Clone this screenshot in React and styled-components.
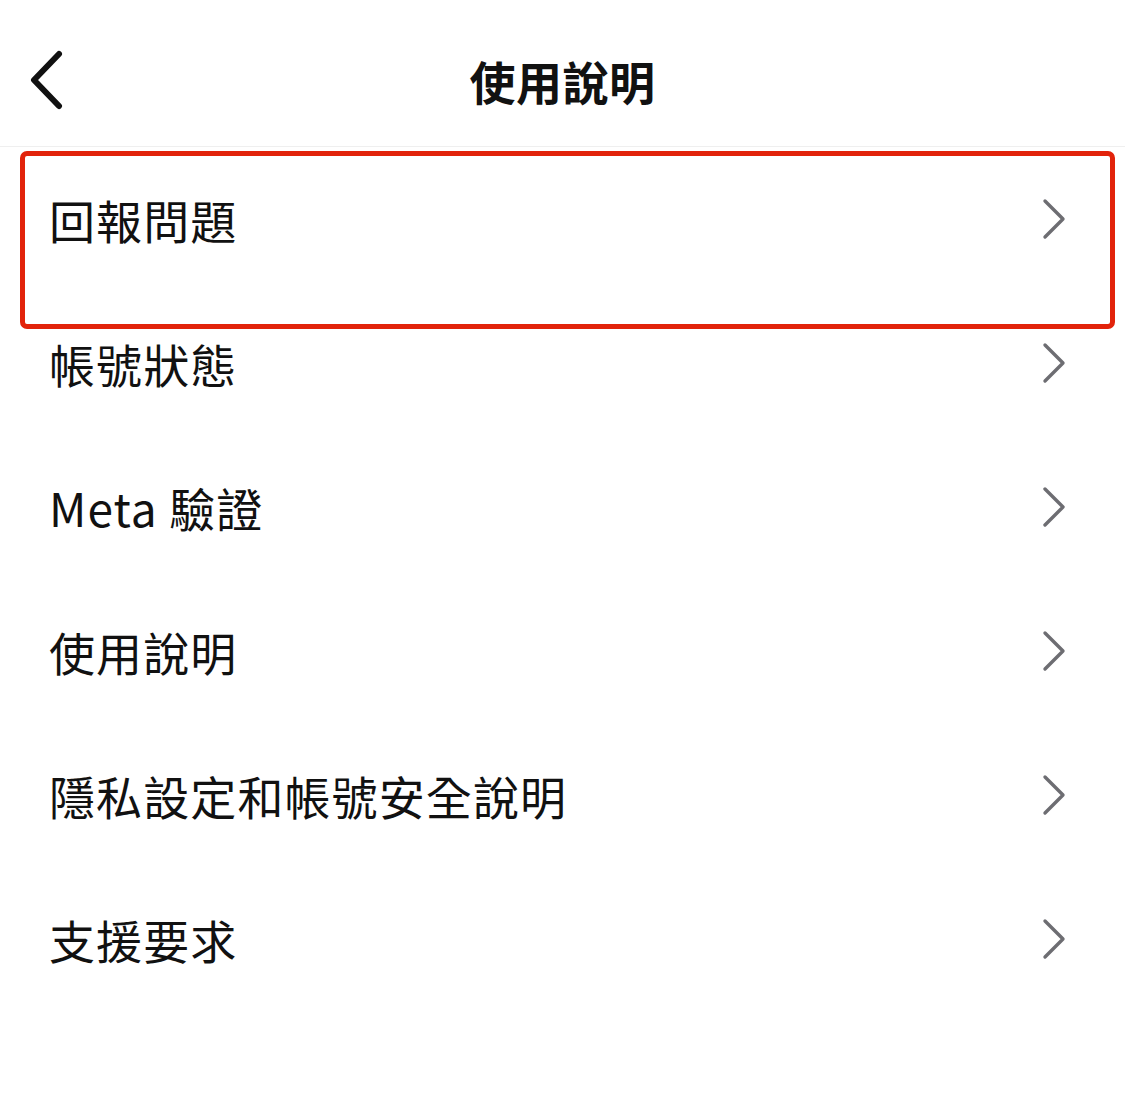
import React from 'react';
import styled, { createGlobalStyle } from 'styled-components';

const GlobalStyle = createGlobalStyle`
  html, body {
    margin: 0;
    padding: 0;
    background: #ffffff;
  }
  body {
    font-family: "Noto Sans CJK TC", "Noto Sans", Inter, sans-serif;
    color: #111111;
  }
`;

const Page = styled.div`
  width: 1125px;
  height: 1112px;
  background: #ffffff;
  overflow: hidden;
`;

const Header = styled.header`
  position: relative;
  height: 147px;
  display: flex;
  align-items: center;
  justify-content: center;
  border-bottom: 1px solid #efefef;
  box-sizing: border-box;
  padding-top: 14px;
`;

const BackButton = styled.button`
  position: absolute;
  left: 22px;
  top: 46px;
  width: 48px;
  height: 68px;
  padding: 0;
  border: none;
  background: none;
  display: flex;
  align-items: center;
  justify-content: center;
`;

const Title = styled.h1`
  margin: 0;
  font-size: 46px;
  font-weight: 700;
  letter-spacing: 0.5px;
  color: #111111;
  line-height: 1;
`;

const List = styled.ul`
  position: relative;
  list-style: none;
  margin: 0;
  padding: 0;
`;

const Row = styled.li`
  height: 144px;
  display: flex;
  align-items: center;
  justify-content: space-between;
  padding: 0 58px 0 49px;
`;

const Label = styled.span`
  font-size: 46px;
  font-weight: 400;
  color: #111111;
  line-height: 1;
  letter-spacing: 1.1px;
`;

const Highlight = styled.div`
  position: absolute;
  left: 20px;
  top: 4px;
  width: 1095px;
  height: 178px;
  border: 5px solid #e2230b;
  border-radius: 7px;
  box-sizing: border-box;
  pointer-events: none;
`;

const BackIcon = () => (
  <svg width="40" height="60" viewBox="0 0 40 60" fill="none">
    <path d="M33 4 L8 30 L33 56" stroke="#111" strokeWidth="6" strokeLinecap="round" strokeLinejoin="round" />
  </svg>
);

const Chevron = () => (
  <svg width="26" height="42" viewBox="0 0 26 42" fill="none">
    <path d="M4 3 L22 21 L4 39" stroke="#6d6d72" strokeWidth="3.4" strokeLinecap="round" strokeLinejoin="round" />
  </svg>
);

const items = ['回報問題', '帳號狀態', 'Meta 驗證', '使用說明', '隱私設定和帳號安全說明', '支援要求'];

export default function App() {
  return (
    <Page>
      <GlobalStyle />
      <Header>
        <BackButton aria-label="返回">
          <BackIcon />
        </BackButton>
        <Title>使用說明</Title>
      </Header>
      <List>
        {items.map((item) => (
          <Row key={item}>
            <Label>{item}</Label>
            <Chevron />
          </Row>
        ))}
        <Highlight />
      </List>
    </Page>
  );
}
